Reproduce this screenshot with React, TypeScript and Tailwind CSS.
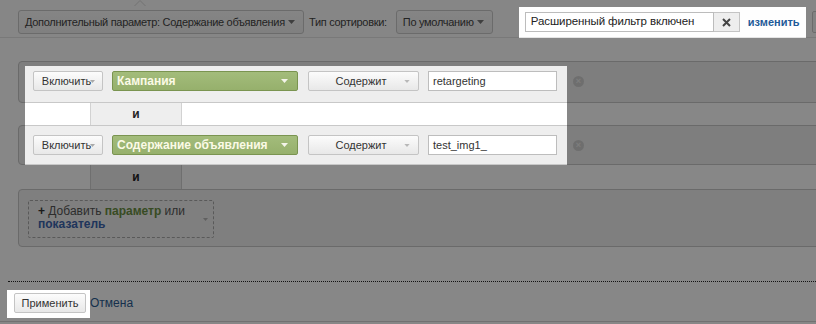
const btn =
  "flex h-[20px] shrink-0 items-center justify-center rounded-[2px] border border-[#c4c4c4] bg-gradient-to-b from-[#fcfcfc] to-[#e8e8e8] text-[11px] text-[#333]";

function Caret({ className }: { className: string }) {
  return (
    <svg width="7" height="4" viewBox="0 0 7 4" className={`shrink-0 ${className}`}>
      <path d="M0 0H7L3.5 4Z" fill="currentColor" />
    </svg>
  );
}

function ConditionRow({ dimension, value, height }: { dimension: string; value: string; height: string }) {
  return (
    <div className={`flex w-[830px] items-start rounded-l-[4px] border border-[#c8c8c8] bg-[#eeeeee] pl-[14px] pt-[9px] ${height}`}>
      <button className={`${btn} w-[70px] pl-[1px]`}>
        Включить
        <Caret className="-ml-[1px] mt-[1px] h-[3px] w-[5px] text-[#aaa]" />
      </button>
      <button className="ml-[9px] flex h-[20px] w-[186px] shrink-0 items-center rounded-[2px] border border-[#7a9450] bg-gradient-to-b from-[#a3bc7b] to-[#96b06c] pl-[4px] pr-[9px] text-[12px] font-bold text-[#fbfae6]">
        <span className="flex-1 text-left">{dimension}</span>
        <Caret className="text-[#f4f4ea]" />
      </button>
      <button className={`${btn} ml-[10px] w-[111px] pl-[9px] pr-[8px]`}>
        <span className="flex-1 text-center">Содержит</span>
        <Caret className="h-[3px] w-[6px] text-[#b8b8b8]" />
      </button>
      <div className="ml-[9px] flex h-[20px] w-[129px] shrink-0 items-center border border-[#bdbdbd] bg-white pl-[4px] text-[11px] text-[#333]">
        {value}
      </div>
      <div className="ml-[16px] mt-[5px] flex h-[11px] w-[11px] shrink-0 items-center justify-center rounded-full bg-[#d0d0d0] text-[9px] font-bold leading-none text-[#ececec]">
        ×
      </div>
    </div>
  );
}

function AndConnector({ height }: { height: string }) {
  return (
    <div className={`ml-[72px] flex w-[92px] items-center justify-center border-x border-[#d2d2d2] bg-[#eeeeee] text-[12px] font-bold text-[#222] ${height}`}>
      и
    </div>
  );
}

export default function App() {
  return (
    <div className="relative h-[324px] w-[816px] overflow-hidden whitespace-nowrap bg-white font-['Liberation_Sans',Arial,sans-serif]">
      {/* Toolbar */}
      <div className="relative h-[38px] border-b border-[#e4e4e4] bg-[#fefefe] pl-[18px] pt-[10px]">
        <svg width="12" height="6" viewBox="0 0 12 6" className="absolute left-[134px] top-0">
          <path d="M0.5 6L6 0.5L11.5 6" fill="none" stroke="#d8d8d8" strokeWidth="1" />
        </svg>
        <div className="flex h-[24px] items-center text-[11px] tracking-[-0.3px] text-[#444]">
          <div className="flex h-[24px] w-[286px] shrink-0 items-center rounded-[3px] border border-[#cacaca] bg-gradient-to-b from-[#fbfbfb] to-[#f1f1f1] pl-[6px] pr-[8px]">
            <span className="flex-1">Дополнительный параметр: Содержание объявления</span>
            <Caret className="text-[#777]" />
          </div>
          <span className="ml-[5px] shrink-0">Тип сортировки:</span>
          <div className="ml-[9px] flex h-[24px] w-[97px] shrink-0 items-center rounded-[3px] border border-[#cacaca] bg-gradient-to-b from-[#fbfbfb] to-[#f1f1f1] pl-[6px] pr-[8px]">
            <span className="flex-1">По умолчанию</span>
            <Caret className="text-[#777]" />
          </div>
          <div className="ml-[32px] flex h-[20px] w-[189px] shrink-0 items-center border border-[#bcbcbc] bg-white pl-[5px] text-[11.5px] tracking-[-0.1px] text-[#222]">
            Расширенный фильтр включен
          </div>
          <button className="flex h-[20px] w-[26px] shrink-0 items-center justify-center border border-l-0 border-[#c4c4c4] bg-[#eeeeee]">
            <svg width="9" height="9" viewBox="0 0 9 9">
              <path d="M1 1L8 8M8 1L1 8" stroke="#444" strokeWidth="2" />
            </svg>
          </button>
          <a className="ml-[8px] shrink-0 font-bold tracking-normal text-[#1f5a98]">изменить</a>
          <div className="ml-[12px] h-[22px] w-[40px] shrink-0 rounded-[2px] border border-[#cacaca] bg-[#f6f6f6]" />
        </div>
      </div>

      {/* Filter conditions */}
      <div className="ml-[18px] mt-[23px]">
        <ConditionRow dimension="Кампания" value="retargeting" height="h-[42px]" />
        <AndConnector height="h-[22px]" />
        <ConditionRow dimension="Содержание объявления" value="test_img1_" height="h-[40px]" />
        <AndConnector height="h-[24px]" />
        <div className="h-[58px] w-[830px] rounded-l-[4px] border border-[#c8c8c8] bg-[#f0f0f0] pl-[9px] pt-[10px]">
          <div className="flex h-[38px] w-[186px] rounded-[2px] border border-dashed border-[#a9a9a9] pl-[9px] pr-[5px] pt-[4px]">
            <div className="flex-1 text-[12px] leading-[13px] text-[#555]">
              <span className="font-bold text-[#333]">+</span> Добавить{" "}
              <span className="font-bold text-[#6a8f43]">параметр</span> или
              <br />
              <span className="font-bold text-[#3c64ad]">показатель</span>
            </div>
            <Caret className="mt-[13px] h-[3px] w-[5px] text-[#b5b5b5]" />
          </div>
        </div>
      </div>

      {/* Footer */}
      <div className="ml-[8px] mt-[34px] border-t border-dotted border-[#222]" />
      <div className="flex h-[40px] items-center border-b border-[#d6d6d6] pb-[7px] pl-[14px] pt-[10px]">
        <button className={`${btn} w-[72px]`}>Применить</button>
        <a className="ml-[4px] text-[12px] text-[#2b5c92]">Отмена</a>
      </div>

      {/* Spotlight overlay */}
      <svg width="816" height="324" className="pointer-events-none absolute inset-0">
        <path
          fillRule="evenodd"
          fill="rgba(0,0,0,0.47)"
          d="M0 0H816V324H0Z M519 7H806V38H519Z M25 66H567V165H25Z M7 290H90V318H7Z"
        />
      </svg>
    </div>
  );
}
